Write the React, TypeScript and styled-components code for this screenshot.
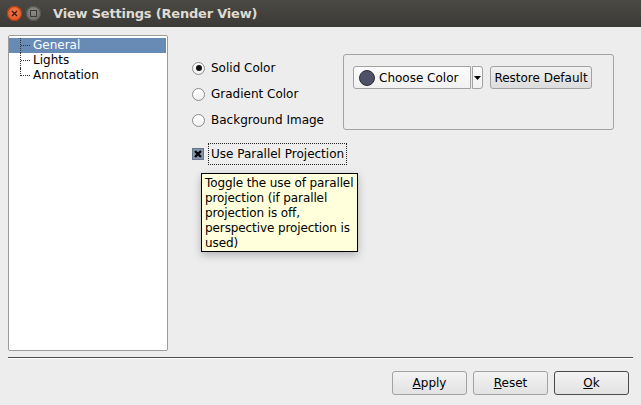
import React from 'react';
import styled, { createGlobalStyle } from 'styled-components';

const Global = createGlobalStyle`
  html, body { margin: 0; padding: 0; background: #ededed; }
  body { font-family: "DejaVu Sans", "Noto Sans", sans-serif; font-size: 12px; color: #000; }
  * { box-sizing: border-box; }
`;

const Window = styled.div`
  width: 641px;
  height: 405px;
  display: flex;
  flex-direction: column;
  background: #ededed;
  overflow: hidden;
`;

const TitleBar = styled.div`
  height: 27px;
  flex: none;
  display: flex;
  align-items: center;
  padding-left: 7px;
  background: linear-gradient(#4a4944, #3b3a36);
`;

const WinButton = styled.span<{ $kind: 'close' | 'min' }>`
  width: 15px;
  height: 15px;
  border-radius: 50%;
  margin-right: 4px;
  display: flex;
  align-items: center;
  justify-content: center;
  background: ${p => (p.$kind === 'close'
    ? 'radial-gradient(circle at 50% 40%, #f37a4c, #df4a16)'
    : 'radial-gradient(circle at 50% 40%, #8a8984, #6a6964)')};
  box-shadow: inset 0 0 0 1px ${p => (p.$kind === 'close' ? '#b23a10' : '#55544f')};
`;

const TitleText = styled.span`
  margin-left: 8px;
  font-family: "DejaVu Sans", sans-serif;
  font-weight: bold;
  font-size: 13px;
  color: #dfdbd2;
  letter-spacing: -0.2px;
`;

const Body = styled.div`
  flex: 1;
  display: flex;
  flex-direction: column;
  padding: 8px 8px 0 8px;
`;

const MainRow = styled.div`
  display: flex;
  height: 316px;
`;

const Tree = styled.div`
  width: 160px;
  height: 316px;
  flex: none;
  background: #fff;
  border: 1px solid #9b9b9b;
  border-radius: 2px;
  padding-top: 2px;
`;

const TreeRow = styled.div<{ $selected?: boolean }>`
  height: 15px;
  display: flex;
  align-items: center;
  color: ${p => (p.$selected ? '#fff' : '#000')};
  background: ${p => (p.$selected ? '#678bb5' : 'transparent')};
  margin: 0 1px 0 0;
`;

const Connector = styled.span<{ $last?: boolean }>`
  position: relative;
  width: 24px;
  height: 15px;
  flex: none;
  &::before {
    content: '';
    position: absolute;
    left: 11px;
    top: 0;
    height: ${p => (p.$last ? '8px' : '15px')};
    border-left: 1px dotted #333;
  }
  &::after {
    content: '';
    position: absolute;
    left: 12px;
    top: 7px;
    width: 9px;
    border-top: 1px dotted #333;
  }
`;

const TreeLabel = styled.span`
  line-height: 15px;
`;

const RightPanel = styled.div`
  flex: 1;
  display: flex;
  flex-direction: column;
  padding: 19px 0 0 24px;
`;

const TopRow = styled.div`
  display: flex;
`;

const RadioColumn = styled.div`
  width: 151px;
  display: flex;
  flex-direction: column;
  padding-top: 1px;
`;

const RadioRow = styled.label`
  height: 26px;
  display: flex;
  align-items: center;
  gap: 6px;
`;

const RadioCircle = styled.span<{ $checked?: boolean }>`
  width: 13px;
  height: 13px;
  border-radius: 50%;
  border: 1px solid #8d8d8d;
  background: linear-gradient(#ffffff, #f0f0f0);
  display: flex;
  align-items: center;
  justify-content: center;
  &::after {
    content: '';
    width: 6px;
    height: 6px;
    border-radius: 50%;
    background: #111;
    display: ${p => (p.$checked ? 'block' : 'none')};
  }
`;

const GroupBox = styled.div`
  width: 271px;
  height: 76px;
  border: 1px solid #a3a3a3;
  border-radius: 3px;
  padding: 11px 0 0 9px;
`;

const ColorRow = styled.div`
  display: flex;
  align-items: flex-start;
`;

const FlatButton = styled.button<{ $w: number; $tone?: 'light' | 'grad' }>`
  width: ${p => p.$w}px;
  height: 23px;
  padding: 0;
  border: 1px solid #a2a2a2;
  border-radius: 3px;
  font-family: "DejaVu Sans", sans-serif;
  font-size: 12px;
  color: #000;
  display: flex;
  align-items: center;
  justify-content: center;
  background: ${p => (p.$tone === 'grad'
    ? 'linear-gradient(#f1f1f1, #dcdcdc)'
    : 'linear-gradient(#fbfbfb, #f1f1f1)')};
`;

const ChooseButton = styled(FlatButton)`
  justify-content: flex-start;
  padding-left: 5px;
  gap: 4px;
  border-radius: 3px 0 0 3px;
`;

const Swatch = styled.span`
  width: 16px;
  height: 16px;
  border-radius: 50%;
  background: #4f5167;
  border: 1px solid #2c2d3a;
`;

const ArrowButton = styled(FlatButton)`
  margin-left: 1px;
  border-radius: 0 3px 3px 0;
`;

const RestoreButton = styled(FlatButton)`
  margin-left: 7px;
`;

const CheckRow = styled.div`
  position: relative;
  margin-top: 10px;
  height: 22px;
  display: flex;
  align-items: center;
`;

const CheckBox = styled.span`
  width: 12px;
  height: 12px;
  display: flex;
  align-items: center;
  justify-content: center;
  background: #8595ad;
  border: 1px solid #66758c;
`;

const FocusLabel = styled.span`
  margin-left: 4px;
  height: 22px;
  display: flex;
  align-items: center;
  padding: 0 2px;
  border: 1px dotted #222;
`;

const Tooltip = styled.div`
  position: absolute;
  left: 9px;
  top: 30px;
  width: 157px;
  background: #ffffdc;
  border: 1px solid #000;
  padding: 2px 2px 0 3px;
  line-height: 15px;
  letter-spacing: -0.1px;
  white-space: nowrap;
  box-shadow: 0 3px 8px rgba(0, 0, 0, 0.25);
  z-index: 2;
`;

const Separator = styled.div`
  margin-top: 6px;
  height: 2px;
  border-top: 1px solid #4e4e4e;
  border-bottom: 1px solid #ffffff;
`;

const ButtonRow = styled.div`
  display: flex;
  justify-content: flex-end;
  gap: 6px;
  margin-top: 12px;
  padding-right: 4px;
`;

const DialogButton = styled.button<{ $default?: boolean }>`
  width: 75px;
  height: 24px;
  padding: 0;
  border: 1px solid ${p => (p.$default ? '#4a4a4a' : '#a2a2a2')};
  border-radius: 3px;
  font-family: "DejaVu Sans", sans-serif;
  font-size: 12px;
  color: #000;
  background: linear-gradient(#f3f3f3, #e2e2e2);
`;

export default function App() {
  return (
    <>
      <Global />
      <Window>
        <TitleBar>
          <WinButton $kind="close">
            <svg width="7" height="7" viewBox="0 0 7 7">
              <path d="M1 1L6 6M6 1L1 6" stroke="#3a1a0a" strokeWidth="1.3" />
            </svg>
          </WinButton>
          <WinButton $kind="min">
            <svg width="7" height="7" viewBox="0 0 7 7">
              <rect x="0.5" y="0.5" width="6" height="6" fill="none" stroke="#3b3a36" strokeWidth="1" />
            </svg>
          </WinButton>
          <TitleText>View Settings (Render View)</TitleText>
        </TitleBar>
        <Body>
          <MainRow>
            <Tree>
              <TreeRow $selected>
                <Connector />
                <TreeLabel>General</TreeLabel>
              </TreeRow>
              <TreeRow>
                <Connector />
                <TreeLabel>Lights</TreeLabel>
              </TreeRow>
              <TreeRow>
                <Connector $last />
                <TreeLabel>Annotation</TreeLabel>
              </TreeRow>
            </Tree>
            <RightPanel>
              <TopRow>
                <RadioColumn>
                  <RadioRow><RadioCircle $checked />Solid Color</RadioRow>
                  <RadioRow><RadioCircle />Gradient Color</RadioRow>
                  <RadioRow><RadioCircle />Background Image</RadioRow>
                </RadioColumn>
                <GroupBox>
                  <ColorRow>
                    <ChooseButton $w={118}><Swatch />Choose Color</ChooseButton>
                    <ArrowButton $w={11}>
                      <svg width="7" height="4" viewBox="0 0 7 4">
                        <path d="M0 0H7L3.5 4Z" fill="#000" />
                      </svg>
                    </ArrowButton>
                    <RestoreButton $w={102} $tone="grad">Restore Default</RestoreButton>
                  </ColorRow>
                </GroupBox>
              </TopRow>
              <CheckRow>
                <CheckBox>
                  <svg width="8" height="8" viewBox="0 0 8 8">
                    <path d="M1 1L7 7M7 1L1 7" stroke="#000" strokeWidth="2.4" />
                  </svg>
                </CheckBox>
                <FocusLabel>Use Parallel Projection</FocusLabel>
                <Tooltip>
                  Toggle the use of parallel<br />
                  projection (if parallel<br />
                  projection is off,<br />
                  perspective projection is<br />
                  used)
                </Tooltip>
              </CheckRow>
            </RightPanel>
          </MainRow>
          <Separator />
          <ButtonRow>
            <DialogButton><u>A</u>pply</DialogButton>
            <DialogButton><u>R</u>eset</DialogButton>
            <DialogButton $default><u>O</u>k</DialogButton>
          </ButtonRow>
        </Body>
      </Window>
    </>
  );
}
